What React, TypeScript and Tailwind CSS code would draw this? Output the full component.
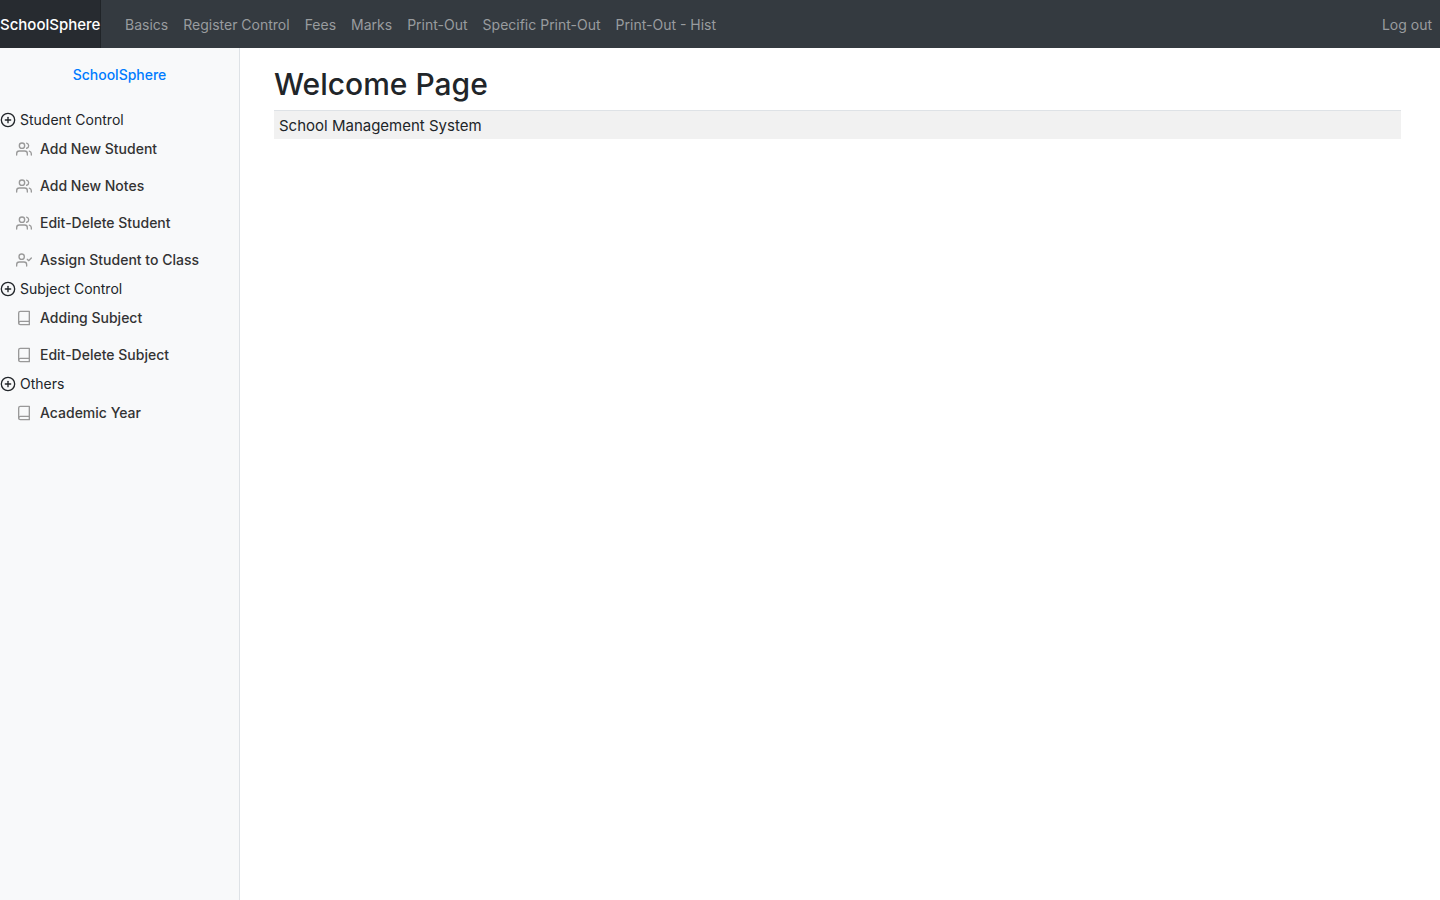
import { FiBook, FiPlusCircle, FiUserCheck, FiUsers } from "react-icons/fi";
import type { IconType } from "react-icons";

type Item = { label: string; icon: IconType };
type Section = { title: string; items: Item[] };

const navLinks = [
  "Basics",
  "Register Control",
  "Fees",
  "Marks",
  "Print-Out",
  "Specific Print-Out",
  "Print-Out - Hist",
];

const sections: Section[] = [
  {
    title: "Student Control",
    items: [
      { label: "Add New Student", icon: FiUsers },
      { label: "Add New Notes", icon: FiUsers },
      { label: "Edit-Delete Student", icon: FiUsers },
      { label: "Assign Student to Class", icon: FiUserCheck },
    ],
  },
  {
    title: "Subject Control",
    items: [
      { label: "Adding Subject", icon: FiBook },
      { label: "Edit-Delete Subject", icon: FiBook },
    ],
  },
  {
    title: "Others",
    items: [{ label: "Academic Year", icon: FiBook }],
  },
];

function TopBar() {
  return (
    <header className="flex h-12 items-stretch bg-[#343a40] text-sm text-[#999c9f]">
      <a
        href="#"
        className="flex w-[101px] shrink-0 items-center border-r border-[#202428] bg-[#272b30] pt-0.5 text-[15px] leading-6 font-medium whitespace-nowrap text-white"
      >
        SchoolSphere
      </a>
      <nav className="flex items-center gap-[15px] pt-0.5 pl-6">
        {navLinks.map((label) => (
          <a key={label} href="#" className="whitespace-nowrap">
            {label}
          </a>
        ))}
      </nav>
      <a href="#" className="ml-auto flex items-center pt-0.5 pr-2 whitespace-nowrap">
        Log out
      </a>
    </header>
  );
}

function Sidebar() {
  return (
    <aside className="w-60 shrink-0 border-r border-[#dee2e6] bg-[#f8f9fa] pt-4 text-sm leading-[21px]">
      <a href="#" className="block text-center font-medium text-[#007bff]">
        SchoolSphere
      </a>
      <div className="pt-6">
        {sections.map((section) => (
          <section key={section.title}>
            <h2 className="flex items-center gap-1 text-[#212529]">
              <FiPlusCircle className="size-4" />
              {section.title}
            </h2>
            <ul>
              {section.items.map(({ label, icon: Icon }) => (
                <li key={label}>
                  <a
                    href="#"
                    className="flex items-center gap-2 px-4 py-2 font-medium text-[#333333]"
                  >
                    <Icon className="size-4 text-[#999999]" />
                    {label}
                  </a>
                </li>
              ))}
            </ul>
          </section>
        ))}
      </div>
    </aside>
  );
}

export default function App() {
  return (
    <div className="flex min-h-screen flex-col bg-white font-['Inter',sans-serif] text-[#212529]">
      <TopBar />
      <div className="flex grow">
        <Sidebar />
        <main className="grow pt-[18px] pr-[39px] pl-[34px]">
          <h1 className="pb-2 text-[30px] leading-9 font-medium">Welcome Page</h1>
          <p className="border-t border-[#dee2e6] bg-[#f1f1f1] px-[5px] pt-[3px] pb-px text-[15px] leading-6">
            School Management System
          </p>
        </main>
      </div>
    </div>
  );
}
